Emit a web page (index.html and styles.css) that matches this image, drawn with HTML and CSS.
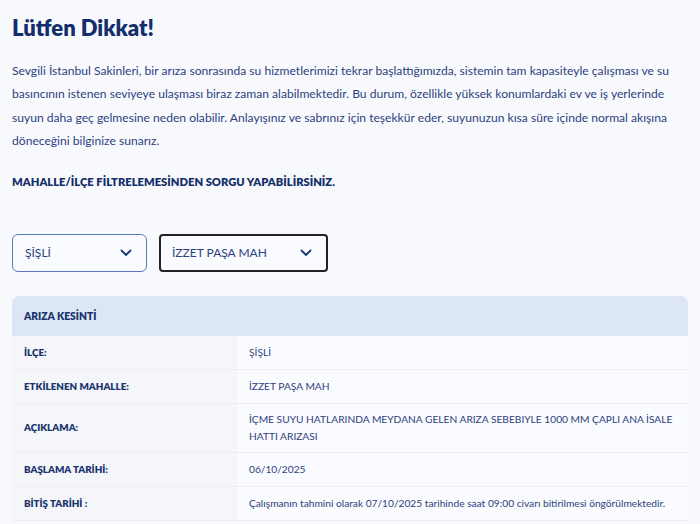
FILE: index.html
```html
<!DOCTYPE html>
<html lang="tr">
<head>
<meta charset="utf-8">
<link rel="stylesheet" href="styles.css">
</head>
<body>
<main class="page">
  <h1 class="title">Lütfen Dikkat!</h1>
  <p class="intro">Sevgili İstanbul Sakinleri, bir arıza sonrasında su hizmetlerimizi tekrar başlattığımızda, sistemin tam kapasiteyle çalışması ve su basıncının istenen seviyeye ulaşması biraz zaman alabilmektedir. Bu durum, özellikle yüksek konumlardaki ev ve iş yerlerinde suyun daha geç gelmesine neden olabilir. Anlayışınız ve sabrınız için teşekkür eder, suyunuzun kısa süre içinde normal akışına döneceğini bilginize sunarız.</p>
  <p class="note">MAHALLE/İLÇE FİLTRELEMESİNDEN SORGU YAPABİLİRSİNİZ.</p>

  <div class="filters">
    <div class="select select-district">
      <span>ŞİŞLİ</span>
      <svg class="chev" width="12" height="8" viewBox="0 0 12 8"><path d="M1.5 1.5 L6 6 L10.5 1.5" fill="none" stroke="#1b3a7a" stroke-width="1.8" stroke-linecap="round" stroke-linejoin="round"/></svg>
    </div>
    <div class="select select-hood">
      <span>İZZET PAŞA MAH</span>
      <svg class="chev" width="12" height="8" viewBox="0 0 12 8"><path d="M1.5 1.5 L6 6 L10.5 1.5" fill="none" stroke="#1b3a7a" stroke-width="1.8" stroke-linecap="round" stroke-linejoin="round"/></svg>
    </div>
  </div>

  <section class="card">
    <div class="card-head">ARIZA KESİNTİ</div>
    <div class="row">
      <div class="label">İLÇE:</div>
      <div class="value">ŞİŞLİ</div>
    </div>
    <div class="row">
      <div class="label">ETKİLENEN MAHALLE:</div>
      <div class="value">İZZET PAŞA MAH</div>
    </div>
    <div class="row">
      <div class="label">AÇIKLAMA:</div>
      <div class="value">İÇME SUYU HATLARINDA MEYDANA GELEN ARIZA SEBEBIYLE 1000 MM ÇAPLI ANA İSALE HATTI ARIZASI</div>
    </div>
    <div class="row">
      <div class="label">BAŞLAMA TARİHİ:</div>
      <div class="value">06/10/2025</div>
    </div>
    <div class="row">
      <div class="label">BİTİŞ TARİHİ :</div>
      <div class="value">Çalışmanın tahmini olarak 07/10/2025 tarihinde saat 09:00 civarı bitirilmesi öngörülmektedir.</div>
    </div>
  </section>
</main>
</body>
</html>
```

FILE: styles.css
```css
html, body {
  margin: 0;
  padding: 0;
}
body {
  background: #f8f9fd;
  font-family: "Lato", "Noto Sans", sans-serif;
  color: #25397a;
  overflow: hidden;
}
.page {
  padding: 12px 12px 0 12px;
}
.title {
  margin: 0;
  font-size: 22px;
  line-height: 32px;
  font-weight: 800;
  color: #122e6c;
}
.intro {
  margin: 15px 0 0 0;
  font-size: 12.1px;
  line-height: 23.4px;
  color: #2d417d;
}
.note {
  margin: 20px 0 0 0;
  font-size: 11.2px;
  line-height: 18px;
  font-weight: 800;
  color: #152f69;
}
.filters {
  display: flex;
  gap: 12px;
  margin-top: 43px;
}
.select {
  box-sizing: border-box;
  height: 38px;
  display: flex;
  align-items: center;
  justify-content: space-between;
  padding: 0 14px 0 12px;
  font-size: 12px;
  color: #2d417d;
  background: #fafbff;
}
.select-district {
  width: 135px;
  border: 1px solid #5b78b8;
  border-radius: 6px;
}
.select-hood {
  width: 169px;
  border: 2px solid #222;
  border-radius: 4px;
  padding-left: 11px;
}
.card {
  margin-top: 24px;
  width: 676px;
}
.card-head {
  height: 40px;
  display: flex;
  align-items: center;
  padding-left: 12px;
  background: #dde6f4;
  border-radius: 7px 7px 0 0;
  font-size: 10.3px;
  font-weight: 800;
  color: #1a346e;
}
.row {
  display: grid;
  grid-template-columns: 225px 1fr;
  border-bottom: 1px solid #eceef3;
}
.label, .value {
  min-height: 33px;
  display: flex;
  align-items: center;
  padding: 7px 12px;
  box-sizing: border-box;
  font-size: 10.2px;
  line-height: 17px;
}
.label {
  background: #f4f6fa;
  font-weight: 800;
  font-size: 9.8px;
  color: #1a346e;
}
.value {
  background: #fafbfe;
  color: #2d417d;
  padding-right: 10px;
}
```
